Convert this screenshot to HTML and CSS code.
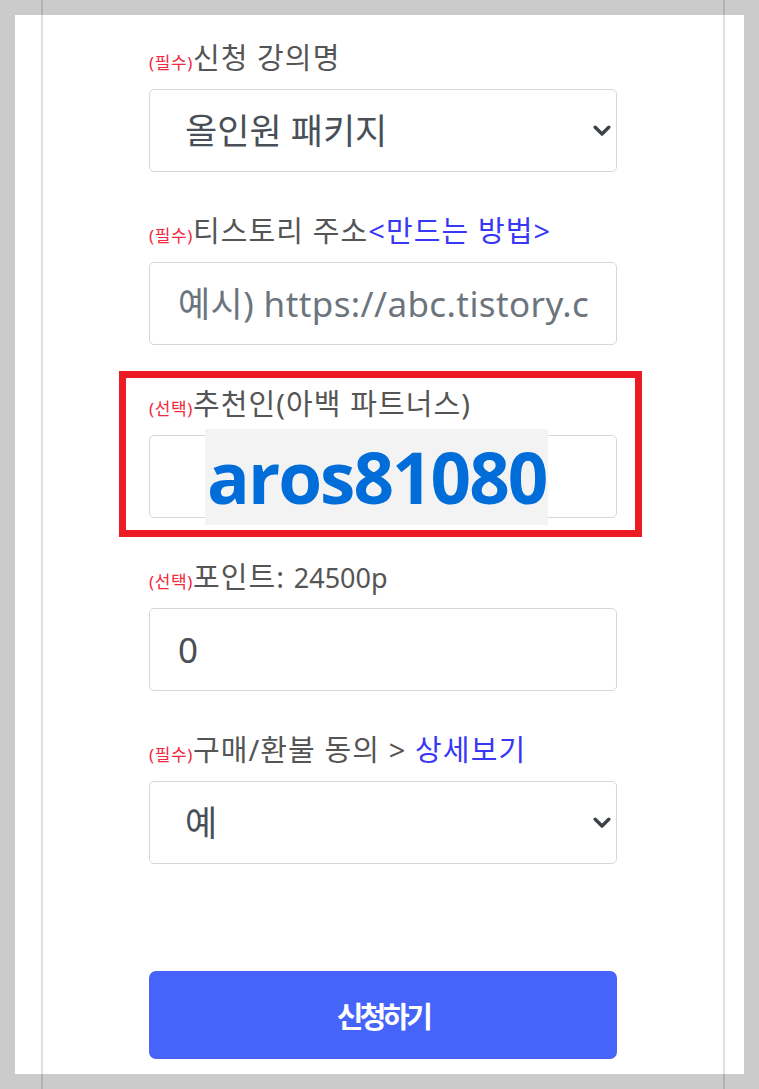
FILE: index.html
```html
<!DOCTYPE html>
<html lang="ko">
<head>
<meta charset="utf-8">
<title>신청</title>
<link rel="stylesheet" href="styles.css">
</head>
<body>
<div class="guides"></div>
<main class="panel">
  <form class="form">
    <div class="group">
      <label class="label"><span class="req">(필수)</span>신청 강의명</label>
      <div class="select">
        <span class="select-value">올인원 패키지</span>
        <svg class="chevron" width="18" height="12" viewBox="0 0 18 12"><path d="M2.2 2.2 L9 9 L15.8 2.2" fill="none" stroke="#3d4248" stroke-width="3.4" stroke-linecap="round" stroke-linejoin="round"/></svg>
      </div>
    </div>
    <div class="group">
      <label class="label"><span class="req">(필수)</span>티스토리 주소<span class="link">&lt;만드는 방법&gt;</span></label>
      <input class="input input-url" type="text" placeholder="예시) https://abc.tistory.com">
    </div>
    <div class="group">
      <label class="label"><span class="req">(선택)</span>추천인(아백 파트너스)</label>
      <div class="input input-rec"><span class="rec-code">aros81080</span></div>
      <div class="mark"></div>
    </div>
    <div class="group">
      <label class="label"><span class="req">(선택)</span>포인트: <span class="num">24500p</span></label>
      <input class="input" type="text" value="0">
    </div>
    <div class="group">
      <label class="label"><span class="req">(필수)</span>구매/환불 동의 &gt; <span class="link">상세보기</span></label>
      <div class="select">
        <span class="select-value">예</span>
        <svg class="chevron" width="18" height="12" viewBox="0 0 18 12"><path d="M2.2 2.2 L9 9 L15.8 2.2" fill="none" stroke="#3d4248" stroke-width="3.4" stroke-linecap="round" stroke-linejoin="round"/></svg>
      </div>
    </div>
    <button class="submit" type="button">신청하기</button>
  </form>
</main>
</body>
</html>
```
FILE: styles.css
```css
html, body {
  margin: 0;
  padding: 0;
}
body {
  background: #cbcbcb;
  padding: 15px;
  height: 1089px;
  box-sizing: border-box;
  position: relative;
  font-family: "Noto Sans", "Noto Sans CJK KR", sans-serif;
}
.guides {
  position: absolute;
  left: 41px;
  top: 0;
  width: 680px;
  height: 1089px;
  border-left: 2px solid rgba(0, 0, 0, 0.12);
  border-right: 2px solid rgba(0, 0, 0, 0.12);
  pointer-events: none;
  z-index: 5;
}
.panel {
  width: 729px;
  height: 1059px;
  background: #fff;
  box-sizing: border-box;
  padding: 25px 0 0 134px;
}
.form {
  width: 468px;
  display: flex;
  flex-direction: column;
}
.group {
  position: relative;
  display: flex;
  flex-direction: column;
  margin-bottom: 41px;
}
.label {
  display: block;
  height: 36px;
  line-height: 36px;
  font-size: 29px;
  letter-spacing: 1.1px;
  color: #555;
  white-space: nowrap;
  margin-bottom: 13px;
}
.req {
  font-size: 17px;
  letter-spacing: 0.6px;
  color: #f22a40;
}
.num {
  font-size: 27px;
  letter-spacing: 0;
}
.link {
  color: #3838f5;
}
.select,
.input {
  height: 83px;
  box-sizing: border-box;
  border: 1px solid #d3d8de;
  border-radius: 5px;
  background: #fff;
  font-family: "Noto Sans", "Noto Sans CJK KR", sans-serif;
  font-size: 35px;
  color: #484f57;
}
.select {
  display: flex;
  align-items: center;
  justify-content: space-between;
  padding: 0 5px 0 35px;
}
.select-value {
  line-height: 1;
}
.chevron {
  display: block;
}
.input {
  width: 100%;
  padding: 0 28px;
  outline: none;
  margin: 0;
}
.input-url {
  letter-spacing: 0.4px;
}
.input::placeholder {
  color: #6c757d;
  opacity: 1;
}
.input-rec {
  display: flex;
  align-items: center;
  padding: 0 0 0 55px;
  overflow: visible;
}
.rec-code {
  flex: none;
  height: 96px;
  line-height: 96px;
  padding: 0 2px;
  background: #f3f3f3;
  font-family: "Open Sans", "Noto Sans", sans-serif;
  font-weight: 700;
  font-size: 71px;
  color: #006dd9;
  letter-spacing: -2px;
}
.mark {
  position: absolute;
  left: -30px;
  right: -25px;
  top: -15px;
  bottom: -19px;
  border: 7px solid #ec1b24;
  pointer-events: none;
}
.submit {
  margin-top: 66px;
  height: 88px;
  border: none;
  border-radius: 7px;
  background: #4764fa;
  color: #fff;
  font-family: "Noto Sans CJK KR", sans-serif;
  font-weight: 700;
  font-size: 29px;
  letter-spacing: -3.5px;
  padding: 0;
}
```
